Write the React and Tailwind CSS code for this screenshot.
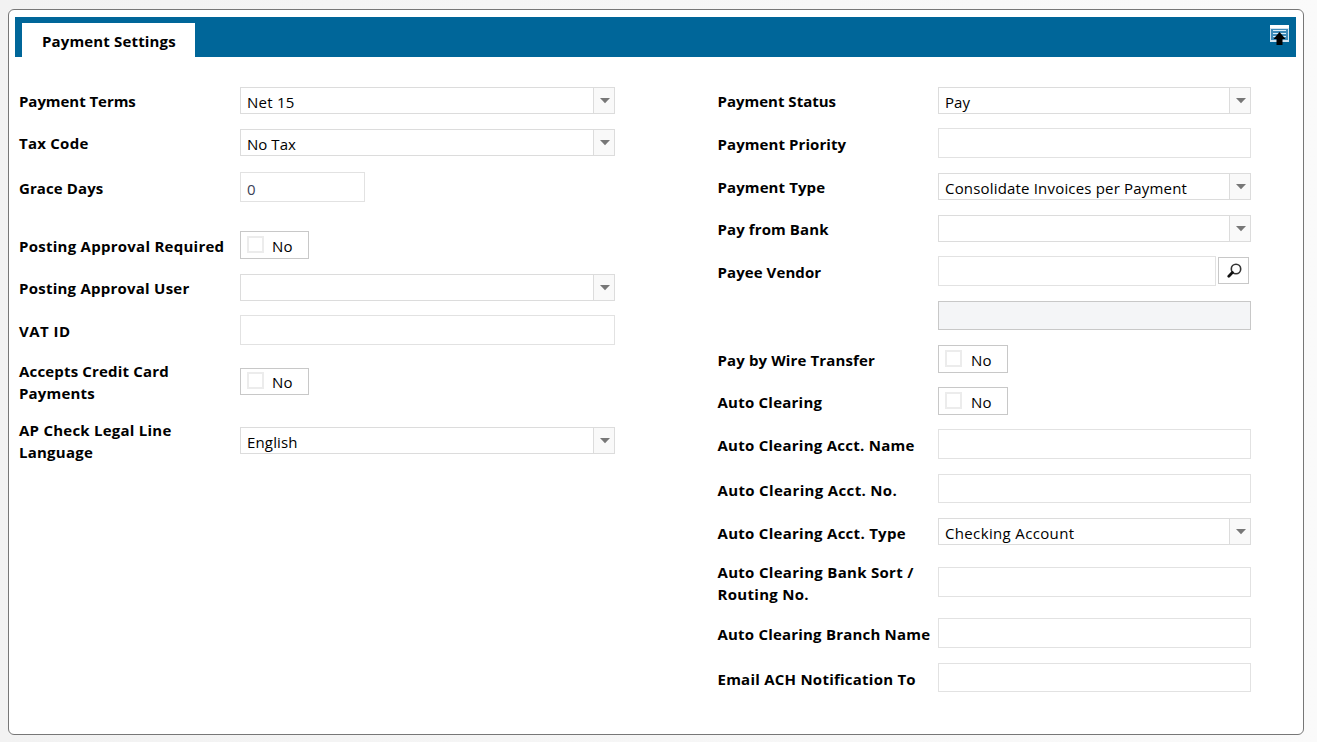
const LEFT = [
  { label: 'Payment Terms', row: 'h-[42px]', lm: 'mt-[3px] tracking-[-0.05px]', kind: 'select', value: 'Net 15', vt: 'tracking-[0.25px]' },
  { label: 'Tax Code', row: 'h-[43px]', lm: 'mt-[3px] tracking-[0.25px]', kind: 'select', value: 'No Tax', vt: 'tracking-[0.05px]' },
  { label: 'Grace Days', row: 'h-[59px]', lm: 'mt-[5px] tracking-[0.1px]', kind: 'input', size: 'w-[125px] h-[30px]', value: '0' },
  { label: 'Posting Approval Required', row: 'h-[43px]', lm: 'mt-1 tracking-[0.26px]', kind: 'toggle', size: 'w-[69px] h-[28px]', box: 'mt-[4px]', inner: 'pt-[3px] ml-[8px]' },
  { label: 'Posting Approval User', row: 'h-[41px]', lm: 'mt-[3px] tracking-[0.24px]', kind: 'select', value: '' },
  { label: 'VAT ID', row: 'h-[46px]', lm: 'mt-[5px] tracking-[0.45px]', kind: 'input', size: 'w-full h-[30px]' },
  { label: 'Accepts Credit Card\nPayments', row: 'h-[59px]', lm: '-mt-px tracking-[0.17px]', cm: 'pt-[7px]', kind: 'toggle', size: 'w-[69px] h-[27px]', box: 'mt-[3px]', inner: 'pt-[2px] ml-[8px]' },
  { label: 'AP Check Legal Line\nLanguage', row: 'h-[50px]', lm: '-mt-px tracking-[0.24px]', cm: 'pt-[7px]', kind: 'select', value: 'English', vt: 'tracking-[0.15px]' },
];

const RIGHT = [
  { label: 'Payment Status', row: 'h-[41px]', lm: 'mt-[3px]', kind: 'select', value: 'Pay', vt: 'tracking-[0.1px]' },
  { label: 'Payment Priority', row: 'h-[45px]', lm: 'mt-[5px] tracking-[0.08px]', kind: 'input', size: 'w-full h-[30px]' },
  { label: 'Payment Type', row: 'h-[42px]', lm: 'mt-[3px] tracking-[0.1px]', kind: 'select', value: 'Consolidate Invoices per Payment', vt: 'tracking-[0.18px]' },
  { label: 'Pay from Bank', row: 'h-[41px]', lm: 'mt-[3px] tracking-[0.1px]', kind: 'select', value: '' },
  { label: 'Payee Vendor', row: 'h-[45px]', lm: 'mt-[5px] tracking-[0.08px]', kind: 'lookup' },
  { label: '', row: 'h-[44px]', lm: 'mt-0', kind: 'readonly' },
  { label: 'Pay by Wire Transfer', row: 'h-[42px]', lm: 'mt-[4px] tracking-[0.13px]', kind: 'toggle', size: 'w-[70px] h-[28px]', box: 'mt-[4px]', inner: 'pt-[3px] ml-[9px]' },
  { label: 'Auto Clearing', row: 'h-[42px]', lm: 'mt-[4px] tracking-[0.23px]', kind: 'toggle', size: 'w-[70px] h-[28px]', box: 'mt-[4px]', inner: 'pt-[3px] ml-[9px]' },
  { label: 'Auto Clearing Acct. Name', row: 'h-[45px]', lm: 'mt-[5px] tracking-[0.26px]', kind: 'input', size: 'w-full h-[30px]' },
  { label: 'Auto Clearing Acct. No.', row: 'h-[44px]', lm: 'mt-[5px] tracking-[0.34px]', kind: 'input', size: 'w-full h-[29px]' },
  { label: 'Auto Clearing Acct. Type', row: 'h-[44px]', lm: 'mt-[4px] tracking-[0.28px]', kind: 'select', value: 'Checking Account', vt: 'tracking-[0.35px]' },
  { label: 'Auto Clearing Bank Sort /\nRouting No.', row: 'h-[56px]', lm: '-mt-px tracking-[0.3px]', cm: 'pt-[5px]', kind: 'input', size: 'w-full h-[30px]' },
  { label: 'Auto Clearing Branch Name', row: 'h-[45px]', lm: 'mt-[5px] tracking-[0.2px]', kind: 'input', size: 'w-full h-[30px]' },
  { label: 'Email ACH Notification To', row: 'h-[40px]', lm: 'mt-[5px] tracking-[0.24px]', kind: 'input', size: 'w-full h-[29px]' },
];

function Select({ value, tracking }) {
  return (
    <div className="flex h-[27px] w-full border border-[#dcdcdc] bg-white">
      <div className={`flex-1 pl-[6px] pt-[3px] leading-[22px] whitespace-nowrap ${tracking || ''}`}>{value}</div>
      <div className="flex w-[21px] border-l border-[#dcdcdc] bg-[#f9f9f9] pl-[5.500px] pt-[10px]">
        <svg width="10" height="6" viewBox="0 0 10 6"><path d="M0 0h10L5 5.300z" fill="#777" /></svg>
      </div>
    </div>
  );
}

function Toggle({ size, box, inner }) {
  return (
    <div className={`flex border border-[#c8c8c8] bg-white pl-[6px] ${size}`}>
      <div className={`h-[17px] w-[17px] border-2 border-[#ececec] bg-white ${box}`} />
      <span className={`leading-[22px] tracking-[0.3px] ${inner}`}>No</span>
    </div>
  );
}

function TextBox({ size, value }) {
  return <div className={`border border-[#e2e2e2] bg-white pl-[6px] pt-[5px] leading-[22px] text-[#3b4257] ${size}`}>{value}</div>;
}

function Lookup() {
  return (
    <div className="flex">
      <div className="h-[30px] w-[278px] border border-[#e2e2e2] bg-white" />
      <div className="ml-[2px] mt-px h-[27px] w-[31px] border border-[#c8c8c8] bg-white pl-[8px] pt-[5px]">
        <svg width="15" height="15" viewBox="0 0 15 15" fill="none">
          <circle cx="9" cy="6" r="4.7" stroke="#333" strokeWidth="1.6" />
          <path d="M5.4 9.6 1.8 13.2" stroke="#111" strokeWidth="2.8" strokeLinecap="round" />
        </svg>
      </div>
    </div>
  );
}

function Control({ field }) {
  if (field.kind === 'select') return <Select value={field.value} tracking={field.vt} />;
  if (field.kind === 'toggle') return <Toggle size={field.size} box={field.box} inner={field.inner} />;
  if (field.kind === 'lookup') return <Lookup />;
  if (field.kind === 'readonly') return <div className="h-[29px] w-full border border-[#c8c8c8] bg-[#f4f5f7]" />;
  return <TextBox size={field.size} value={field.value} />;
}

function Column({ fields, labelWidth, controlWidth }) {
  return (
    <div className="flex flex-col">
      {fields.map((f, i) => (
        <div key={i} className={`flex items-start ${f.row}`}>
          <div className={`shrink-0 whitespace-pre font-bold leading-[22px] ${labelWidth} ${f.lm}`}>{f.label}</div>
          <div className={`shrink-0 ${controlWidth} ${f.cm || ''}`}><Control field={f} /></div>
        </div>
      ))}
    </div>
  );
}

function CollapseIcon() {
  return (
    <svg width="19" height="21" viewBox="0 0 19 21">
      <rect x="0" y="0" width="19" height="17" fill="#cfe3f0" />
      <rect x="0" y="0" width="19" height="3" fill="#fff" />
      <rect x="1" y="4" width="17" height="11" fill="#3d8ab8" />
      <path d="M3 5.5h13M3 8.5h13M3 11.5h13" stroke="#d8ecf8" />
      <path d="M9.500 7 3.500 14H6.500V20h6v-6h3z" fill="#000" />
    </svg>
  );
}

export default function App() {
  return (
    <div className="h-[742px] w-[1317px] overflow-hidden bg-[#f3f3f3] bg-linear-to-r from-[#f2f2f2] to-[#fafafa] pl-[8px] pt-[9px] font-['Open_Sans','Noto_Sans',sans-serif] text-[15px] text-black">
      <div className="h-[726px] w-[1296px] rounded-[6px] border border-[#777] bg-white pl-[6px] pt-[7px]">
        <div className="flex h-[40px] w-[1281px] justify-between bg-[#006699] pl-[7px] pr-[7px] pt-[6px]">
          <div className="h-[34px] w-[173px] bg-white pl-[20px] pt-[7px] font-bold leading-[22px] tracking-[0.15px] whitespace-nowrap">Payment Settings</div>
          <div className="pt-[2px]"><CollapseIcon /></div>
        </div>
        <div className="flex pl-[4px] pt-[30px]">
          <Column fields={LEFT} labelWidth="w-[221px]" controlWidth="w-[375px]" />
          <div className="w-[102.5px] shrink-0" />
          <Column fields={RIGHT} labelWidth="w-[220.5px]" controlWidth="w-[313px]" />
        </div>
      </div>
    </div>
  );
}
